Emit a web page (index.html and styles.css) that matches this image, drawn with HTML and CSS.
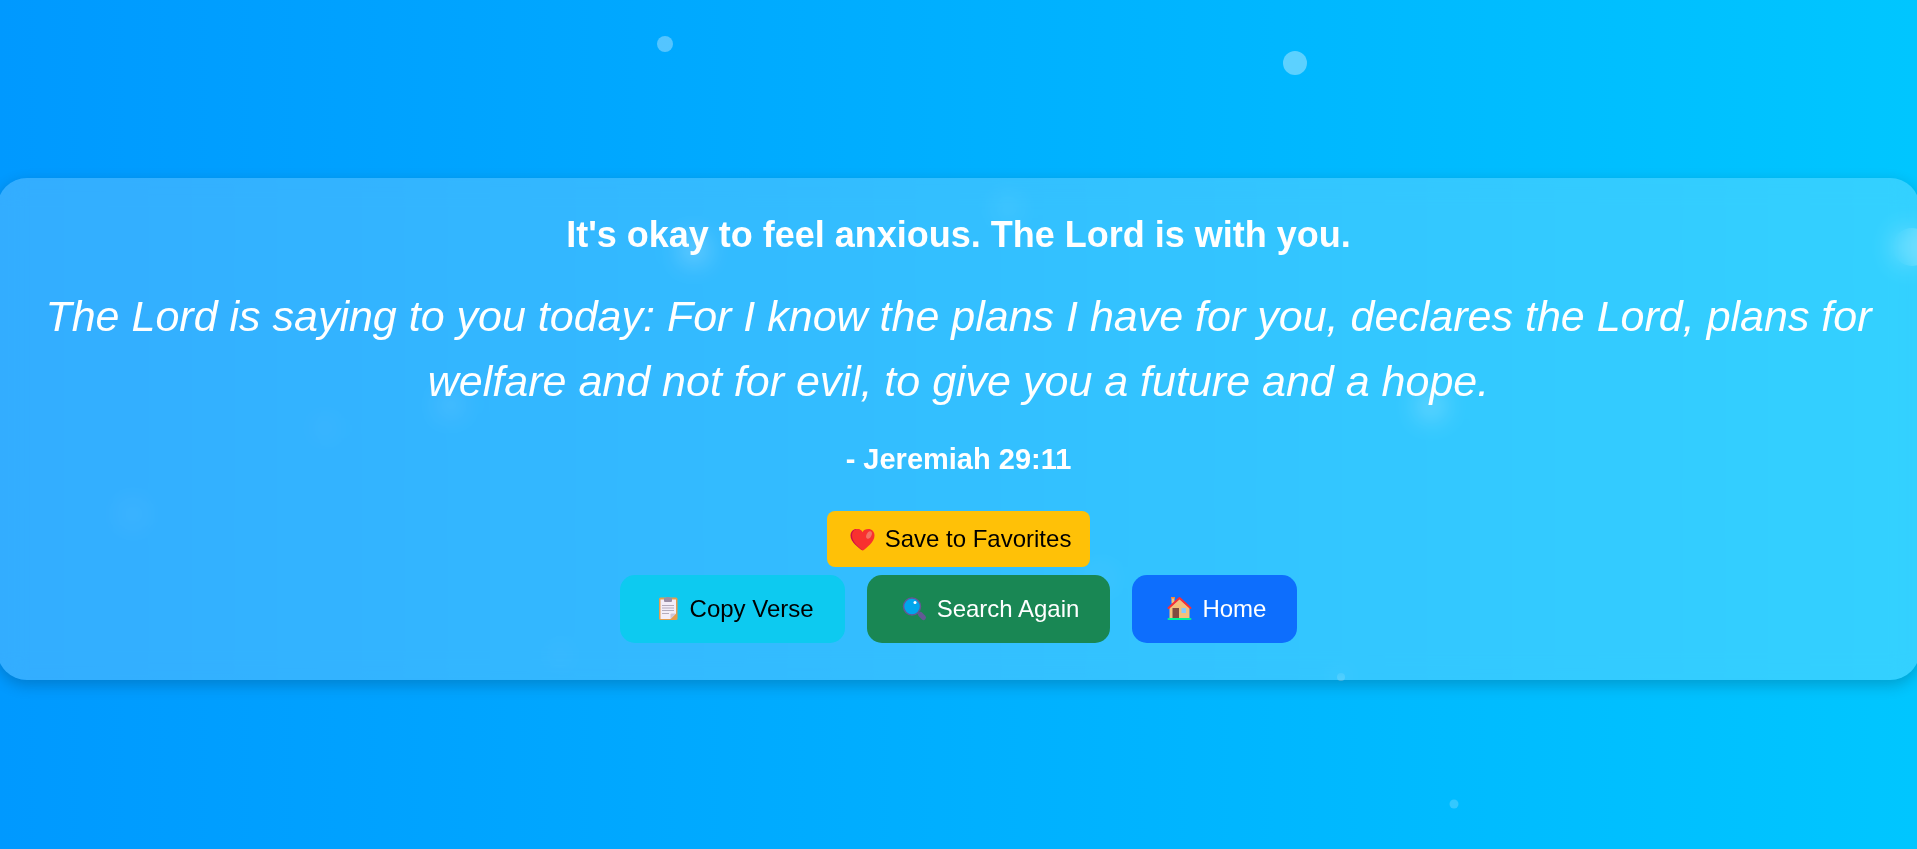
FILE: index.html
```html
<!DOCTYPE html>
<html lang="en">
<head>
<meta charset="utf-8">
<meta name="viewport" content="width=device-width, initial-scale=1">
<title>Verse for today</title>
<link rel="stylesheet" href="styles.css">
</head>
<body>
<div class="bubbles" aria-hidden="true">
  <span class="bubble b1"></span>
  <span class="bubble b2"></span>
  <span class="bubble b3"></span>
  <span class="bubble b4"></span>
  <span class="bubble b5"></span>
  <span class="bubble b6"></span>
  <span class="bubble b7"></span>
  <span class="bubble b8"></span>
  <span class="bubble b9"></span>
  <span class="bubble b10"></span>
  <span class="bubble b11"></span>
  <span class="bubble b12"></span>
  <span class="bubble b13"></span>
</div>
<main class="card">
  <h1 class="message">It's okay to feel anxious. The Lord is with you.</h1>
  <p class="verse">The Lord is saying to you today: For I know the plans I have for you, declares the Lord, plans for welfare and not for evil, to give you a future and a hope.</p>
  <p class="source">- Jeremiah 29:11</p>
  <button type="button" class="btn save">
    <svg class="icon" viewBox="0 0 33 28" aria-hidden="true">
      <path fill="#ca0b4a" d="M16.500 25.500C12.500 23 4.500 17 4.500 10.500C4.500 6.500 7.300 4 10.500 4C13.500 4 15.500 5.500 16.500 7.500L18 20Z"/>
      <path fill="#f8312f" d="M17 25.500C13.500 23 6 17 6 10.500C6 6.500 8.500 4 11.500 4C14 4 15.800 5.400 16.500 7.200C17.500 5.200 19.500 4 22.300 4C25.800 4 28.500 6.600 28.500 10.500C28.500 17 20.500 23 17 25.500Z"/>
      <ellipse cx="23" cy="10" rx="2.500" ry="4" fill="#f37366" transform="rotate(25 23 10)"/>
    </svg>
    <span>Save to Favorites</span>
  </button>
  <div class="actions">
    <button type="button" class="btn wide copy">
      <svg class="icon" viewBox="0 0 33 28" aria-hidden="true">
        <rect x="8" y="2.500" width="18.500" height="22.500" rx="1.500" fill="#e39d4e"/>
        <path fill="#f3eef8" d="M9.500 4.500h15.500v14l-5.500 5.500h-10z"/>
        <path fill="#cdc4d6" d="M25 18.500h-4.500q-1 0-1 1v4.500z"/>
        <path fill="#998ea4" d="M13 3h2q.2-1 2-1t2 1h2v3q0 1-1 1h-6q-1 0-1-1z"/>
        <path stroke="#b4acbc" d="M11 10.500h12M11 13h12M11 15.500h12M11 18.500h7"/>
      </svg>
      <span>Copy Verse</span>
    </button>
    <button type="button" class="btn wide search">
      <svg class="icon" viewBox="0 0 33 28" aria-hidden="true">
        <path stroke="#635994" stroke-width="2" d="M19 17l4 4"/>
        <path stroke="#635994" stroke-width="5" stroke-linecap="round" d="M22.500 19.500l3 3"/>
        <circle cx="14" cy="11.500" r="8.500" fill="#00a6ed" stroke="#635994" stroke-width="1.500"/>
        <circle cx="17" cy="7.500" r="1.500" fill="#fff"/>
      </svg>
      <span>Search Again</span>
    </button>
    <a href="#" class="btn wide home">
      <svg class="icon" viewBox="0 0 33 28" aria-hidden="true">
        <path fill="#f3c07b" d="M8.500 2.500h3v6h-3zM6.500 13L16.500 4L26.500 13V23.500H6.500z"/>
        <path fill="#ff822d" d="M8 2h4v1.500h-4z"/>
        <path fill="#804c3f" d="M9.500 13h6.500v10.500h-6.500z"/>
        <path fill="#83cbff" d="M18.500 13h4.500v5h-4.500z"/>
        <path fill="none" stroke="#f92f35" stroke-width="2" stroke-linecap="round" stroke-linejoin="round" d="M5.500 13L16.500 3L27.500 13"/>
        <rect x="4.500" y="23" width="24" height="2" rx="1" fill="#00f397"/>
      </svg>
      <span>Home</span>
    </a>
  </div>
</main>
</body>
</html>
```
FILE: styles.css
```css
* {
  box-sizing: border-box;
}

body {
  margin: 0;
  min-height: 100vh;
  padding-top: 8px;
  display: flex;
  flex-direction: column;
  justify-content: center;
  overflow: hidden;
  font-family: Arial, "Liberation Sans", sans-serif;
  color: #fff;
  background: linear-gradient(to right, #0099ff, #00c6ff);
}

.bubbles {
  position: fixed;
  inset: 0;
  overflow: hidden;
}

.bubble {
  position: absolute;
  width: 24px;
  height: 24px;
  border-radius: 50%;
  background: #fff;
  transform: translate(-50%, -50%);
}

.b1 { left: 665px; top: 44px; width: 16px; height: 16px; opacity: 0.33; }
.b2 { left: 1295px; top: 63px; opacity: 0.36; }
.b3 { left: 1454px; top: 804px; width: 9px; height: 9px; opacity: 0.2; }
.b4 { left: 1341px; top: 677px; width: 8px; height: 8px; opacity: 0.3; }
.b5 { left: 694px; top: 250px; width: 28px; height: 28px; opacity: 0.3; }
.b6 { left: 1008px; top: 208px; opacity: 0.1; }
.b7 { left: 1912px; top: 247px; width: 38px; height: 38px; opacity: 0.3; }
.b8 { left: 1431px; top: 406px; width: 30px; height: 30px; opacity: 0.26; }
.b9 { left: 450px; top: 405px; opacity: 0.15; }
.b10 { left: 325px; top: 428px; opacity: 0.05; }
.b11 { left: 132px; top: 514px; width: 30px; height: 30px; opacity: 0.06; }
.b12 { left: 560px; top: 655px; opacity: 0.04; }
.b13 { left: 1100px; top: 578px; opacity: 0.08; }

.card {
  position: relative;
  margin: 0 -3px;
  padding: 36px 40px 37px;
  display: flex;
  flex-direction: column;
  align-items: center;
  text-align: center;
  border-radius: 30px;
  background: rgba(255, 255, 255, 0.2);
  box-shadow: 0 5px 15px rgba(0, 0, 0, 0.2);
  backdrop-filter: blur(12px);
}

.message {
  margin: 0 0 28px;
  font-size: 36px;
  line-height: 42px;
}

.verse {
  margin: 0 0 28px;
  font-size: 43px;
  font-style: italic;
  line-height: 65px;
}

.source {
  margin: 0 0 35px;
  font-size: 29px;
  font-weight: bold;
  line-height: 34px;
}

.btn {
  display: flex;
  align-items: center;
  gap: 6px;
  padding: 10px 19px;
  border: 0;
  border-radius: 8px;
  font: 24px/36px Arial, "Liberation Sans", sans-serif;
  color: #fff;
  text-decoration: none;
  cursor: pointer;
}

.wide {
  padding: 16px 31px;
  border-radius: 15px;
}

.icon {
  width: 33px;
  height: 28px;
  fill: none;
}

.save {
  background: #ffc107;
  color: #000;
}

.copy {
  background: #0dcaf0;
  color: #000;
}

.search {
  background: #198754;
}

.home {
  background: #0d6efd;
}

.actions {
  display: flex;
  flex-wrap: wrap;
  justify-content: center;
  gap: 22px;
  margin-top: 8px;
}
```
